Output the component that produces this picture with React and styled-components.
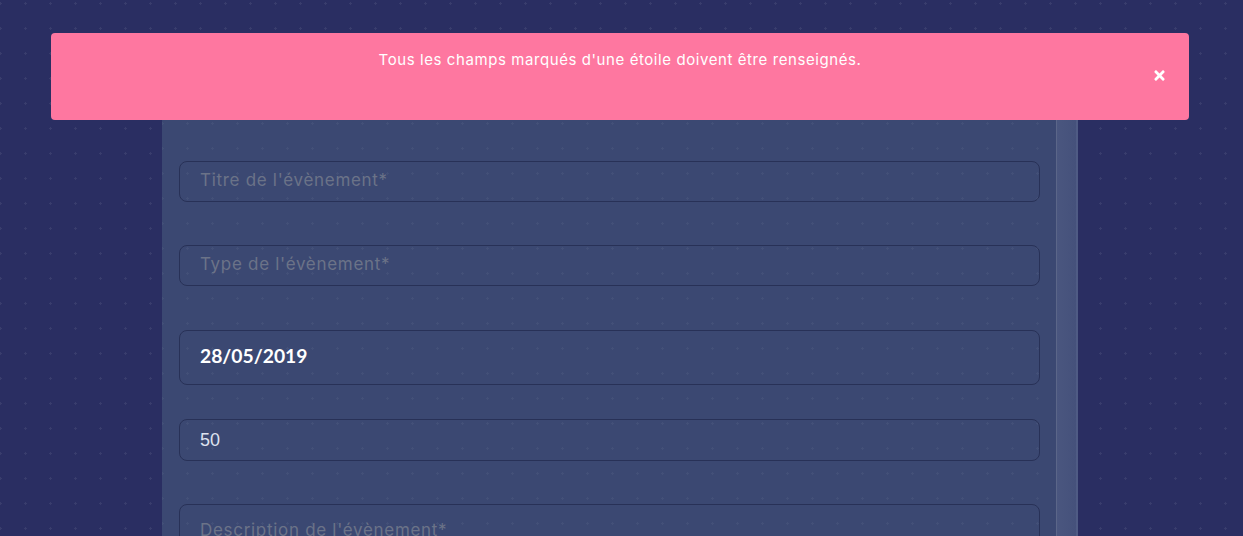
import React from "react";
import styled, { createGlobalStyle } from "styled-components";
import { FaTimes } from "react-icons/fa";

const Global = createGlobalStyle`
  html, body { margin: 0; padding: 0; }
  body {
    background-color: #2a2e62;
    background-image: radial-gradient(circle, rgba(255,255,255,0.07) 1px, transparent 1.4px);
    background-size: 25px 25px;
    background-position: -12px -9px;
    min-height: 536px;
    overflow: hidden;
    font-family: "Open Sans", "Inter", sans-serif;
  }
`;

const Page = styled.div`
  height: 536px;
  overflow: hidden;
  display: flex;
  justify-content: center;
  padding-top: 70px;
  box-sizing: border-box;
`;

const Card = styled.div`
  width: 916px;
  margin-left: -3px;
  display: grid;
  grid-template-columns: 1fr 22px;
  background-color: #3b4872;
  background-image: radial-gradient(circle, rgba(255,255,255,0.045) 1px, transparent 1.4px);
  background-size: 25px 25px;
  background-position: -12px -9px;
`;

const Form = styled.form`
  display: flex;
  flex-direction: column;
  padding: 91px 16px 0 17px;
`;

const Strip = styled.div`
  border-left: 1px solid #5b6689;
  border-right: 2px solid #4f5b84;
  background: linear-gradient(90deg, #4a567f, #45517b);
`;

const Group = styled.div`
  margin-bottom: ${(p) => p.$gap}px;
`;

const Input = styled.div`
  box-sizing: border-box;
  height: ${(p) => p.$h}px;
  border: 1px solid #283157;
  border-radius: 8px;
  display: flex;
  align-items: ${(p) => (p.$top ? "flex-start" : "center")};
  padding: ${(p) => (p.$top ? "18px 0 0 20px" : `0 0 ${p.$lift || 0}px 20px`)};
`;

const Placeholder = styled.span`
  font-family: "Inter", "Open Sans", sans-serif;
  font-size: 17px;
  color: #6b7388;
  letter-spacing: 0.7px;
  margin-top: -3px;
`;

const DateValue = styled.span`
  font-family: "Lato", sans-serif;
  font-weight: 700;
  font-size: 19.3px;
  color: #ffffff;
`;

const NumberValue = styled.span`
  font-family: "Liberation Sans", Arial, sans-serif;
  font-size: 18px;
  color: #dde2ef;
`;

const Toast = styled.div`
  position: fixed;
  top: 33px;
  left: 51px;
  width: 1138px;
  height: 87px;
  box-sizing: border-box;
  background: #fe77a0;
  border-radius: 4px;
  padding-top: 16px;
  text-align: center;
`;

const ToastText = styled.p`
  margin: 0;
  font-family: "Inter", "Open Sans", sans-serif;
  font-size: 15px;
  letter-spacing: 0.58px;
  line-height: 22px;
  color: #ffffff;
`;

const Close = styled.button`
  position: absolute;
  right: 22px;
  top: 34px;
  width: 16px;
  height: 16px;
  padding: 0;
  border: none;
  background: transparent;
  color: #ffffff;
  display: flex;
  align-items: center;
  justify-content: center;
  cursor: pointer;
`;

export default function App() {
  return (
    <>
      <Global />
      <Page>
        <Card>
          <Form>
            <Group $gap={43}>
              <Input $h={41}>
                <Placeholder>Titre de l'évènement*</Placeholder>
              </Input>
            </Group>
            <Group $gap={44}>
              <Input $h={41}>
                <Placeholder>Type de l'évènement*</Placeholder>
              </Input>
            </Group>
            <Group $gap={34}>
              <Input $h={55} $lift={5}>
                <DateValue>28/05/2019</DateValue>
              </Input>
            </Group>
            <Group $gap={43}>
              <Input $h={42}>
                <NumberValue>50</NumberValue>
              </Input>
            </Group>
            <Group $gap={0}>
              <Input $h={80} $top>
                <Placeholder>Description de l'évènement*</Placeholder>
              </Input>
            </Group>
          </Form>
          <Strip />
        </Card>
      </Page>
      <Toast>
        <ToastText>Tous les champs marqués d'une étoile doivent être renseignés.</ToastText>
        <Close aria-label="Fermer">
          <FaTimes size={15} />
        </Close>
      </Toast>
    </>
  );
}
